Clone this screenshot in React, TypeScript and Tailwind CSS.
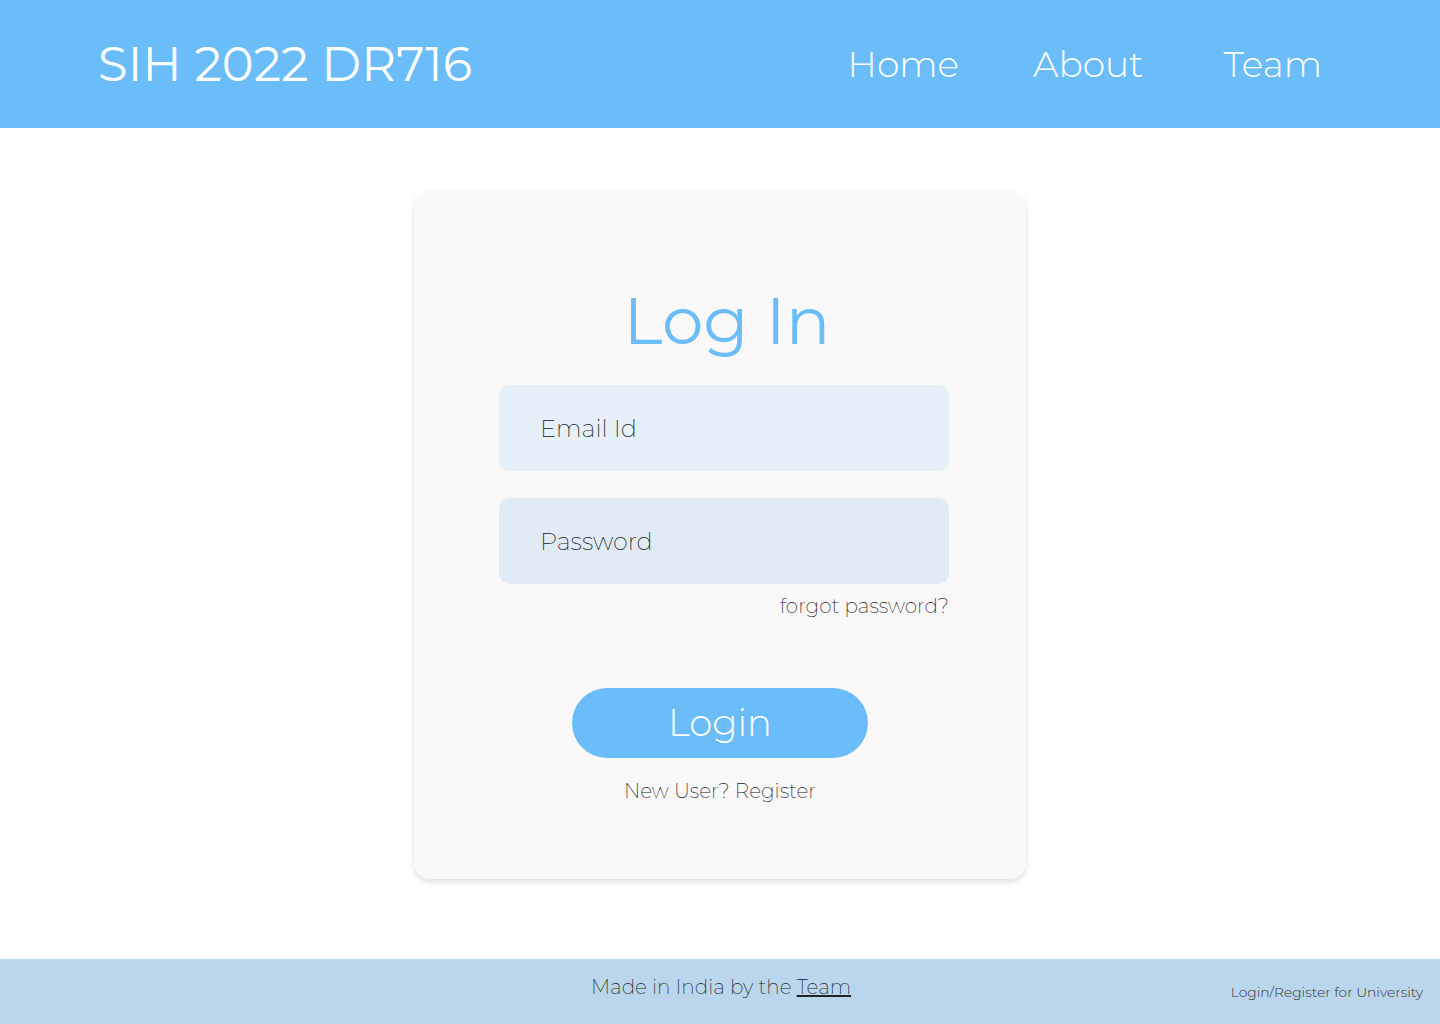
const font = { fontFamily: '"Montserrat", Inter, "Open Sans", sans-serif' };

const App = () => {
  return (
    <div className="min-h-screen flex flex-col bg-white" style={font}>
      <header className="h-[128px] bg-[#6bbdf9] flex items-center justify-between pl-[98px] pr-[118px] text-white">
        <h1 className="text-[48px] font-normal tracking-[0.2px]">SIH 2022 DR716</h1>
        <nav className="flex items-center text-[36px] font-light">
          <a href="#">Home</a>
          <a href="#" className="ml-[74px]">About</a>
          <a href="#" className="ml-[80px]">Team</a>
        </nav>
      </header>

      <main className="flex-1 flex justify-center pt-[63px] pb-[80px]">
        <div className="w-[612px] h-[688px] bg-[#faf8f9] rounded-[16px] shadow-[0_3px_6px_rgba(0,0,0,0.12)] flex flex-col items-center pt-[97px]">
          <h2 className="text-[66px] text-[#6bbdf9] font-normal leading-none mb-[31px] ml-[14px]">Log In</h2>
          <div className="w-[450px] flex flex-col ml-[8px]">
            <input
              type="email"
              placeholder="Email Id"
              className="h-[86px] rounded-[10px] bg-[#e6f0fa] px-[41px] text-[24px] font-extralight text-[#222] placeholder:text-[#222] outline-none"
            />
            <input
              type="password"
              placeholder="Password"
              className="mt-[27px] h-[86px] rounded-[10px] bg-[#e1ebf5] px-[41px] text-[24px] font-extralight text-[#222] placeholder:text-[#222] outline-none"
            />
            <a href="#" className="self-end mt-[7px] text-[20px] font-extralight text-[#222]">forgot password?</a>
          </div>
          <button className="mt-[67px] w-[296px] h-[70px] rounded-full bg-[#6bbdf9] text-white text-[37px] font-light">
            Login
          </button>
          <a href="#" className="mt-[18px] text-[20px] font-extralight text-[#222]">New User? Register</a>
        </div>
      </main>

      <footer className="h-[65px] bg-[#bad6ec] relative flex items-center justify-center text-[#222] font-extralight">
        <p className="text-[20px] -mt-[10px] ml-[2px]">
          Made in India by the <a href="#" className="underline">Team</a>
        </p>
        <a href="#" className="absolute right-[17px] top-[23px] text-[13.8px] font-light text-[#333]">Login/Register for University</a>
      </footer>
    </div>
  );
};

export default App;
